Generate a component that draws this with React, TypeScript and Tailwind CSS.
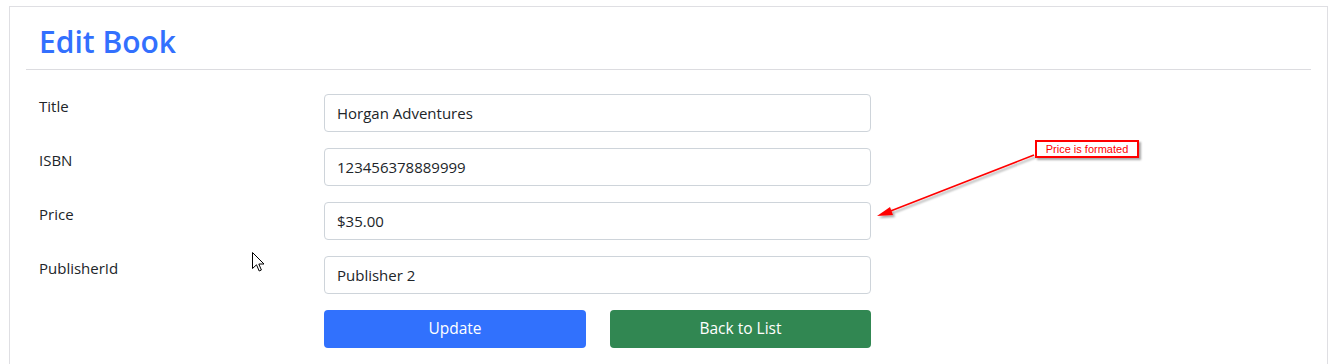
import React from "react";

const font = { fontFamily: '"Open Sans", "Noto Sans", sans-serif' };

function Row({ label, value }: { label: string; value: string }) {
  return (
    <div className="flex items-start">
      <div className="w-[298px] shrink-0 pl-[13px] text-[15px] leading-[24px] text-[#212529]">{label}</div>
      <div className="w-[547px] h-[38px] border border-[#ced4da] rounded-[4px] px-[12px] py-[6px] text-[15px] leading-[24px] text-[#212529] bg-white">
        {value}
      </div>
    </div>
  );
}

export default function App() {
  return (
    <div className="relative w-[1331px] h-[364px] bg-white overflow-hidden" style={font}>
      <div className="pt-[6px] pl-[9px] pr-[3px]">
        <div className="border border-[#dfdfe3] h-[400px] px-[16px]">
          <h2 className="pl-[13px] pt-[16px] pb-[8px] text-[30px] leading-[38px] font-semibold text-[#3370fe]">Edit Book</h2>
          <div className="border-t border-[#dcdce0]" />
          <div className="pt-[24px] flex flex-col gap-[16px]">
            <Row label="Title" value="Horgan Adventures" />
            <Row label="ISBN" value="123456378889999" />
            <Row label="Price" value="$35.00" />
            <Row label="PublisherId" value="Publisher 2" />
            <div className="flex">
              <div className="w-[298px] shrink-0" />
              <div className="w-[547px] flex gap-[24px]">
                <button className="w-[262px] h-[38px] rounded-[4px] bg-[#3171fd] text-white text-[15.5px]">Update</button>
                <button className="w-[261px] h-[38px] rounded-[4px] bg-[#318752] text-white text-[15.5px]">Back to List</button>
              </div>
            </div>
          </div>
        </div>
      </div>

      {/* annotation */}
      <svg className="absolute left-0 top-0" width="1331" height="364" style={{ pointerEvents: "none" }}>
        <defs>
          <filter id="sh" x="-20%" y="-20%" width="140%" height="140%">
            <feDropShadow dx="2" dy="2" stdDeviation="1.2" floodColor="#000" floodOpacity="0.35" />
          </filter>
        </defs>
        <g filter="url(#sh)">
          <line x1="1034" y1="155" x2="888" y2="212" stroke="#ff0000" strokeWidth="1.6" />
          <polygon points="877,216 890,207 893,215" fill="#ff0000" />
        </g>
      </svg>
      <div
        className="absolute left-[1035px] top-[140px] w-[104px] h-[18px] border-2 border-[#ff0000] bg-white flex items-center justify-center text-[11px] leading-none text-[#ff0000] shadow-[2px_2px_2px_rgba(0,0,0,0.35)]"
        style={{ fontFamily: '"Liberation Sans", Arial, sans-serif' }}
      >
        Price is formated
      </div>

      {/* cursor */}
      <svg className="absolute left-[252px] top-[252px]" width="14" height="22" viewBox="0 0 14 22">
        <path d="M0.5 0.5 L0.5 16.5 L4.5 12.8 L7.2 19 L9.4 18 L6.8 12 L12 12 Z" fill="#fff" stroke="#000" strokeWidth="1" strokeLinejoin="round" />
      </svg>
    </div>
  );
}
